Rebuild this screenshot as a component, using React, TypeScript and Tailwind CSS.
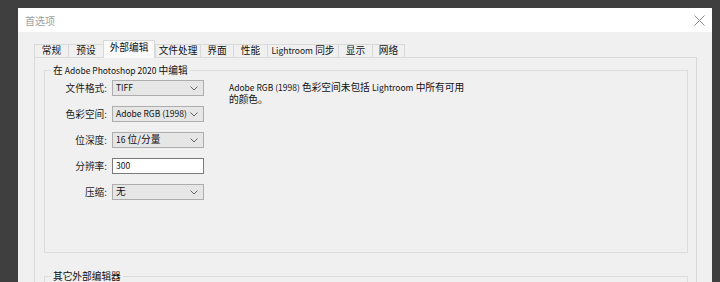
import React from "react";

const FONT = '"Noto Sans CJK SC", "Noto Sans", sans-serif';

function L({ children }: { children: React.ReactNode }) {
  return <span className="text-[8.5px]">{children}</span>;
}

function Chevron() {
  return (
    <svg width="8" height="5" viewBox="0 0 8 5" className="shrink-0">
      <polyline points="0.5,0.5 4,4 7.5,0.5" fill="none" stroke="#666" strokeWidth="1" />
    </svg>
  );
}

function Select({ children }: { children: React.ReactNode }) {
  return (
    <div className="w-[92px] h-[16px] flex items-center justify-between pl-[3px] pr-[5px] bg-[#e6e6e6] border border-[#adadad] text-[#111]">
      <span className="leading-none whitespace-nowrap">{children}</span>
      <Chevron />
    </div>
  );
}

function Row({ label, children }: { label: string; children: React.ReactNode }) {
  return (
    <div className="flex items-center h-[16px]">
      <div className="w-[63px] text-right pr-[1px] text-[#222] whitespace-nowrap">{label}</div>
      <div className="ml-[4px]">{children}</div>
    </div>
  );
}

const tabs: { label: React.ReactNode; w: string; active?: boolean }[] = [
  { label: "常规", w: "w-[34px]" },
  { label: "预设", w: "w-[35px]" },
  { label: "外部编辑", w: "w-[52px]", active: true },
  { label: "文件处理", w: "w-[45px]" },
  { label: "界面", w: "w-[33px]" },
  { label: "性能", w: "w-[34px]" },
  { label: <><L>Lightroom</L> 同步</>, w: "w-[71px]" },
  { label: "显示", w: "w-[34px]" },
  { label: "网络", w: "w-[33px]" },
];

export default function App() {
  return (
    <div
      className="w-[720px] h-[282px] overflow-hidden bg-[#3f3f3f] pt-[8px] pl-[18px] pr-[8px] text-[9.7px]"
      style={{ fontFamily: FONT }}
    >
      <div className="bg-white h-[300px] flex flex-col">
        {/* title bar */}
        <div className="h-[24px] flex items-center justify-between pl-[7px] pr-[7px] shrink-0">
          <span className="text-[#a0a0a0] text-[10px]">首选项</span>
          <svg width="11" height="11" viewBox="0 0 11 11">
            <path d="M0.5 0.5 L10.5 10.5 M10.5 0.5 L0.5 10.5" stroke="#8a8a8a" strokeWidth="1" fill="none" />
          </svg>
        </div>
        {/* body */}
        <div className="flex-1 bg-[#f0f0f0] pt-[8px] pl-[16px] pr-[15px]">
          {/* tabs */}
          <div className="flex items-end h-[17px] relative z-10">
            {tabs.map((t, i) => (
              <div
                key={i}
                className={
                  t.active
                    ? `${t.w} h-[18px] -mb-px bg-[#fafafa] border-l border-t border-r border-[#d9d9d9] flex items-start justify-center pt-[2px] text-[#111]`
                    : `${t.w} h-[13px] bg-[#f0f0f0] border-t border-l border-[#d9d9d9] ${i === tabs.length - 1 ? "border-r" : ""} flex items-center justify-center text-[#111]`
                }
              >
                <span className="leading-none whitespace-nowrap">{t.label}</span>
              </div>
            ))}
          </div>
          {/* panel */}
          <div className="border border-[#d9d9d9] bg-[#f0f0f0] h-[260px] pl-[9px] pr-[8px] pt-[5px]">
            <fieldset className="border border-[#dcdcdc] h-[190px] pl-0 pr-0">
              <legend className="ml-[6px] px-[2px] leading-[14px] text-[#111]">
                在 <L>Adobe Photoshop 2020</L> 中编辑
              </legend>
              <div className="flex pt-[3px]">
                <div className="flex flex-col gap-[10px]">
                  <Row label="文件格式:">
                    <Select><L>TIFF</L></Select>
                  </Row>
                  <Row label="色彩空间:">
                    <Select><L>Adobe RGB (1998)</L></Select>
                  </Row>
                  <Row label="位深度:">
                    <Select><L>16</L> 位/分量</Select>
                  </Row>
                  <Row label="分辨率:">
                    <div className="w-[92px] h-[16px] flex items-center pl-[3px] bg-white border border-[#7a7a7a] text-[#111]">
                      <span className="leading-none"><L>300</L></span>
                    </div>
                  </Row>
                  <Row label="压缩:">
                    <Select>无</Select>
                  </Row>
                </div>
                <div className="ml-[25px] pt-[1px] leading-[12px] text-[#111]">
                  <L>Adobe RGB (1998)</L> 色彩空间未包括 <L>Lightroom</L> 中所有可用
                  <br />
                  的颜色。
                </div>
              </div>
            </fieldset>
            <fieldset className="border border-[#dcdcdc] h-[60px] mt-[16px]">
              <legend className="ml-[6px] px-[2px] leading-[14px] text-[#111]">其它外部编辑器</legend>
            </fieldset>
          </div>
        </div>
      </div>
    </div>
  );
}
